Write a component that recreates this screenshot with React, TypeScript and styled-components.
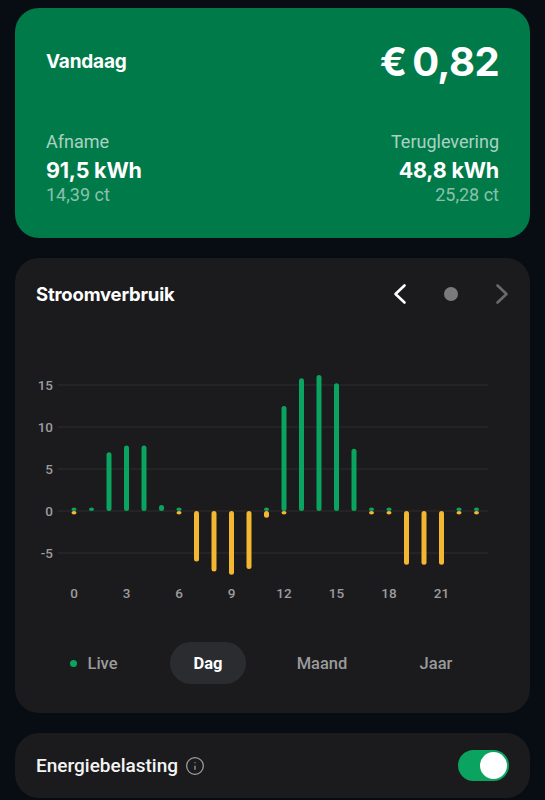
import React from 'react';
import styled, { createGlobalStyle } from 'styled-components';
import { Info } from 'lucide-react';

const GREEN = '#0ba360';
const YELLOW = '#f4b731';

// [afname, teruglevering] per uur
const HOURS: [number, number][] = [
  [0.1, -0.3], [0.2, 0], [7.0, 0], [7.8, 0], [7.8, 0], [0.7, 0],
  [0.1, -0.3], [0, -6.0], [0, -7.2], [0, -7.6], [0, -6.9], [0.2, -0.8],
  [12.5, -0.3], [15.8, 0], [16.2, 0], [15.2, 0], [7.4, 0], [0.4, -0.3],
  [0.2, -0.3], [0, -6.4], [0, -6.4], [0, -6.4], [0.1, -0.2], [0.1, -0.2],
];

const ZERO_Y = 202;
const UNIT = 8.4;
const X0 = 59;
const STEP = 17.5;
const BAR_W = 5;

const GlobalStyle = createGlobalStyle`
  body {
    margin: 0;
    background: #080c13;
    font-family: Roboto, 'Noto Sans', sans-serif;
    color: #fff;
  }
`;

const Page = styled.div`
  padding: 8px 15px 0;
  display: flex;
  flex-direction: column;
  gap: 20px;
`;

const SummaryCard = styled.section`
  background: #017a4a;
  border-radius: 24px;
  padding: 31px 31px 32px;
`;

const Row = styled.div<{ $align?: string }>`
  display: flex;
  justify-content: space-between;
  align-items: ${p => p.$align || 'center'};
`;

const Heading = styled.h2<{ $size?: number }>`
  margin: 0;
  font-family: Inter, sans-serif;
  font-weight: 700;
  font-size: ${p => p.$size || 18}px;
  letter-spacing: -0.2px;
  line-height: 30px;
`;

const Total = styled.div`
  font-family: Inter, sans-serif;
  font-weight: 700;
  font-size: 40px;
  line-height: 46px;
  letter-spacing: -0.6px;
`;

const Stats = styled(Row)`
  margin-top: 46px;
`;

const Stat = styled.div<{ $right?: boolean }>`
  display: flex;
  flex-direction: column;
  align-items: ${p => (p.$right ? 'flex-end' : 'flex-start')};
`;

const StatLabel = styled.span`
  font-size: 18px;
  line-height: 22px;
  color: rgba(255, 255, 255, 0.68);
`;

const StatValue = styled.span`
  font-family: Inter, sans-serif;
  font-weight: 700;
  font-size: 21.5px;
  line-height: 28px;
  margin-top: 3px;
  letter-spacing: -0.2px;
`;

const StatSub = styled.span`
  font-size: 18px;
  line-height: 22px;
  color: rgba(255, 255, 255, 0.55);
`;

const Card = styled.section`
  background: #1b1b1d;
  border-radius: 24px;
`;

const ChartCard = styled(Card)`
  padding: 21px 0 29px;
`;

const ChartHeader = styled(Row)`
  padding: 0 16px 0 21px;
`;

const Nav = styled.div`
  display: flex;
  align-items: center;
  gap: 27px;
`;

const NavButton = styled.button<{ $dim?: boolean }>`
  width: 24px;
  height: 30px;
  padding: 0;
  border: 0;
  background: none;
  display: flex;
  align-items: center;
  justify-content: center;
  color: ${p => (p.$dim ? '#6a6a6c' : '#fff')};
`;

const PageDot = styled.span`
  width: 14px;
  height: 14px;
  margin: 0 5px;
  border-radius: 50%;
  background: #7a7a7c;
`;

const Chart = styled.svg`
  display: block;
  width: 515px;
  height: 300px;
`;

const AxisText = styled.text`
  font-family: Roboto, sans-serif;
  font-size: 13.5px;
  font-weight: 500;
  fill: #9c9c9e;
`;

const Tabs = styled.div`
  margin: 33px 0 0 22px;
  display: grid;
  grid-template-columns: repeat(4, 114px);
  justify-items: center;
  align-items: center;
`;

const Tab = styled.button<{ $active?: boolean }>`
  height: 42px;
  padding: 0 24px;
  border: 0;
  border-radius: 21px;
  display: flex;
  align-items: center;
  gap: 10px;
  font-family: Roboto, sans-serif;
  font-size: 16.5px;
  font-weight: ${p => (p.$active ? 700 : 500)};
  color: ${p => (p.$active ? '#fff' : '#9a9a9c')};
  background: ${p => (p.$active ? '#2b2c2f' : 'transparent')};
`;

const LiveDot = styled.span`
  width: 7px;
  height: 7px;
  border-radius: 50%;
  background: ${GREEN};
`;

const TaxCard = styled(Card)`
  padding: 17px 21px 17px;
  display: flex;
  align-items: center;
  justify-content: space-between;
`;

const TaxLabel = styled.div`
  display: flex;
  align-items: center;
  gap: 7px;
  font-size: 19px;
  font-weight: 500;
  color: #f4f4f4;
  svg {
    color: #a0a0a2;
  }
`;

const Toggle = styled.div`
  width: 51px;
  height: 31px;
  border-radius: 16px;
  background: ${GREEN};
  display: flex;
  align-items: center;
  justify-content: flex-end;
  padding: 0 2px;
  box-sizing: border-box;
`;

const Knob = styled.span`
  width: 27px;
  height: 27px;
  border-radius: 50%;
  background: #fff;
`;

const Chevron = ({ dir }: { dir: 'left' | 'right' }) => (
  <svg width="16" height="22" viewBox="0 0 16 22" fill="none">
    <polyline
      points={dir === 'left' ? '12.5,2.5 3.5,11 12.5,19.5' : '3.5,2.5 12.5,11 3.5,19.5'}
      stroke="currentColor"
      strokeWidth={2.6}
      strokeLinecap="round"
      strokeLinejoin="round"
    />
  </svg>
);

const Bar = ({ x, value, color }: { x: number; value: number; color: string }) => {
  if (value === 0) return null;
  const h = Math.max(Math.abs(value) * UNIT, 3.5);
  const y = value > 0 ? ZERO_Y - h : ZERO_Y;
  return <rect x={x - BAR_W / 2} y={y} width={BAR_W} height={h} rx={2.5} fill={color} />;
};

const UsageChart = () => (
  <Chart viewBox="0 0 515 300">
    {[15, 10, 5, 0, -5].map(v => (
      <g key={v}>
        <line x1={43} x2={473} y1={ZERO_Y - v * UNIT} y2={ZERO_Y - v * UNIT} stroke="#2f2f32" strokeWidth={1.2} />
        <AxisText x={38} y={ZERO_Y - v * UNIT + 4.5} textAnchor="end">
          {v}
        </AxisText>
      </g>
    ))}
    {HOURS.map(([use, back], i) => (
      <g key={i}>
        <Bar x={X0 + i * STEP} value={back} color={YELLOW} />
        <Bar x={X0 + i * STEP} value={use} color={GREEN} />
      </g>
    ))}
    {[0, 3, 6, 9, 12, 15, 18, 21].map(h => (
      <AxisText key={h} x={X0 + h * STEP} y={289} textAnchor="middle">
        {h}
      </AxisText>
    ))}
  </Chart>
);

export default function App() {
  return (
    <>
      <GlobalStyle />
      <Page>
        <SummaryCard>
          <Row>
            <Heading $size={19}>Vandaag</Heading>
            <Total>€{'\u2009'}0,82</Total>
          </Row>
          <Stats $align="flex-start">
            <Stat>
              <StatLabel>Afname</StatLabel>
              <StatValue>91,5 kWh</StatValue>
              <StatSub>14,39 ct</StatSub>
            </Stat>
            <Stat $right>
              <StatLabel>Teruglevering</StatLabel>
              <StatValue>48,8 kWh</StatValue>
              <StatSub>25,28 ct</StatSub>
            </Stat>
          </Stats>
        </SummaryCard>

        <ChartCard>
          <ChartHeader>
            <Heading $size={18.5}>Stroomverbruik</Heading>
            <Nav>
              <NavButton>
                <Chevron dir="left" />
              </NavButton>
              <PageDot />
              <NavButton $dim>
                <Chevron dir="right" />
              </NavButton>
            </Nav>
          </ChartHeader>
          <UsageChart />
          <Tabs>
            <Tab>
              <LiveDot />
              Live
            </Tab>
            <Tab $active>Dag</Tab>
            <Tab>Maand</Tab>
            <Tab>Jaar</Tab>
          </Tabs>
        </ChartCard>

        <TaxCard>
          <TaxLabel>
            Energiebelasting
            <Info size={20} strokeWidth={1.5} />
          </TaxLabel>
          <Toggle>
            <Knob />
          </Toggle>
        </TaxCard>
      </Page>
    </>
  );
}
